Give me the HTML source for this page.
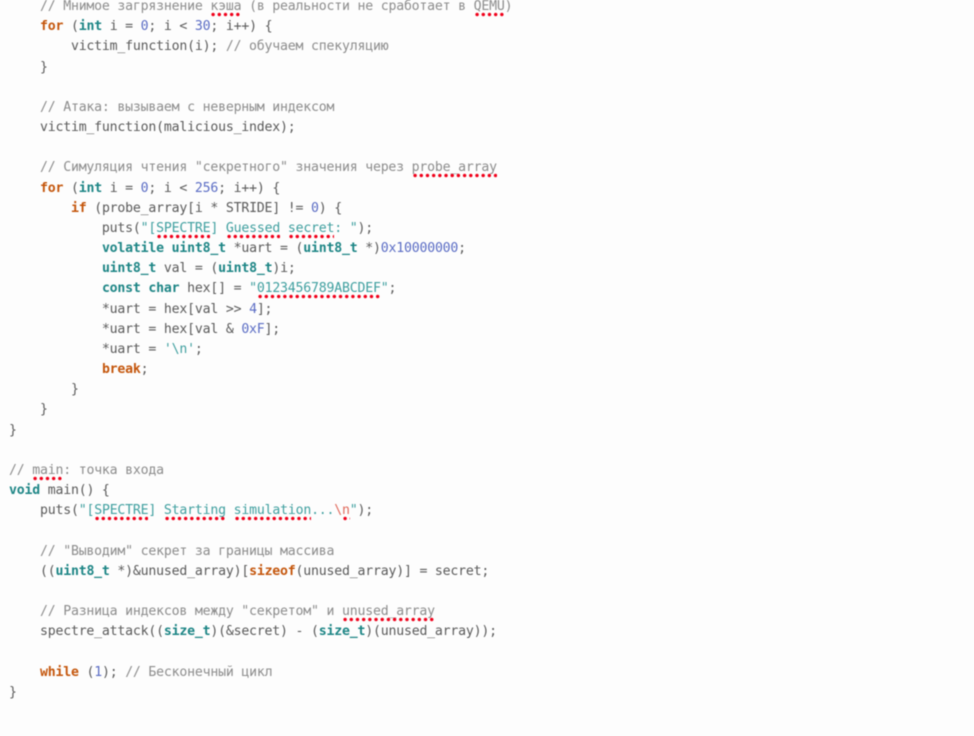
<!DOCTYPE html>
<html lang="ru">
<head>
<meta charset="utf-8">
<style>
html,body{margin:0;padding:0;width:974px;height:736px;overflow:hidden;background:#fdfdfd}
pre{position:absolute;left:9px;top:-3px;margin:0;font-family:"DejaVu Sans Mono","Liberation Mono",monospace;font-size:13.2px;letter-spacing:-.196px;line-height:20.17px;color:#5a5a5a;filter:blur(.4px);white-space:pre}
.c{color:#8c8c8c}
.k{color:#c4560c;font-weight:bold}
.t{color:#1d8585;font-weight:bold}
.n{color:#5a6cc4}
.s{color:#3f9f9f}
.r{color:#e06a5c}
.e{position:relative}
.e::after{content:"";position:absolute;left:0;right:0;bottom:-3px;height:5px;background:radial-gradient(circle at 50% 50%,#f0001a 0,#f0001a 1.6px,transparent 1.9px) 0 0/6.2px 5px repeat-x}
</style>
</head>
<body>
<pre><span class="c">    // Мнимое загрязнение <span class="e">кэша</span> (в реальности не сработает в <span class="e">QEMU</span>)</span>
    <span class="k">for</span> (<span class="t">int</span> i = <span class="n">0</span>; i &lt; <span class="n">30</span>; i++) {
        victim_function(i); <span class="c">// обучаем спекуляцию</span>
    }

<span class="c">    // Атака: вызываем с неверным индексом</span>
    victim_function(malicious_index);

<span class="c">    // Симуляция чтения "секретного" значения через <span class="e">probe_array</span></span>
    <span class="k">for</span> (<span class="t">int</span> i = <span class="n">0</span>; i &lt; <span class="n">256</span>; i++) {
        <span class="k">if</span> (probe_array[i * STRIDE] != <span class="n">0</span>) {
            puts(<span class="s">"[<span class="e">SPECTRE</span>] <span class="e">Guessed</span> <span class="e">secret</span>: "</span>);
            <span class="t">volatile uint8_t</span> *uart = (<span class="t">uint8_t</span> *)<span class="n">0x10000000</span>;
            <span class="t">uint8_t</span> val = (<span class="t">uint8_t</span>)i;
            <span class="t">const char</span> hex[] = <span class="s">"<span class="e">0123456789ABCDEF</span>"</span>;
            *uart = hex[val &gt;&gt; <span class="n">4</span>];
            *uart = hex[val &amp; <span class="n">0xF</span>];
            *uart = <span class="s">'\n'</span>;
            <span class="k">break</span>;
        }
    }
}

<span class="c">// <span class="e">main</span>: точка входа</span>
<span class="t">void</span> main() {
    puts(<span class="s">"[<span class="e">SPECTRE</span>] <span class="e">Starting</span> <span class="e">simulation</span>...<span class="r">\<span class="e">n</span></span>"</span>);

<span class="c">    // "Выводим" секрет за границы массива</span>
    ((<span class="t">uint8_t</span> *)&amp;unused_array)[<span class="k">sizeof</span>(unused_array)] = secret;

<span class="c">    // Разница индексов между "секретом" и <span class="e">unused_array</span></span>
    spectre_attack((<span class="t">size_t</span>)(&amp;secret) - (<span class="t">size_t</span>)(unused_array));

    <span class="k">while</span> (<span class="n">1</span>); <span class="c">// Бесконечный цикл</span>
}
</pre>
</body>
</html>
